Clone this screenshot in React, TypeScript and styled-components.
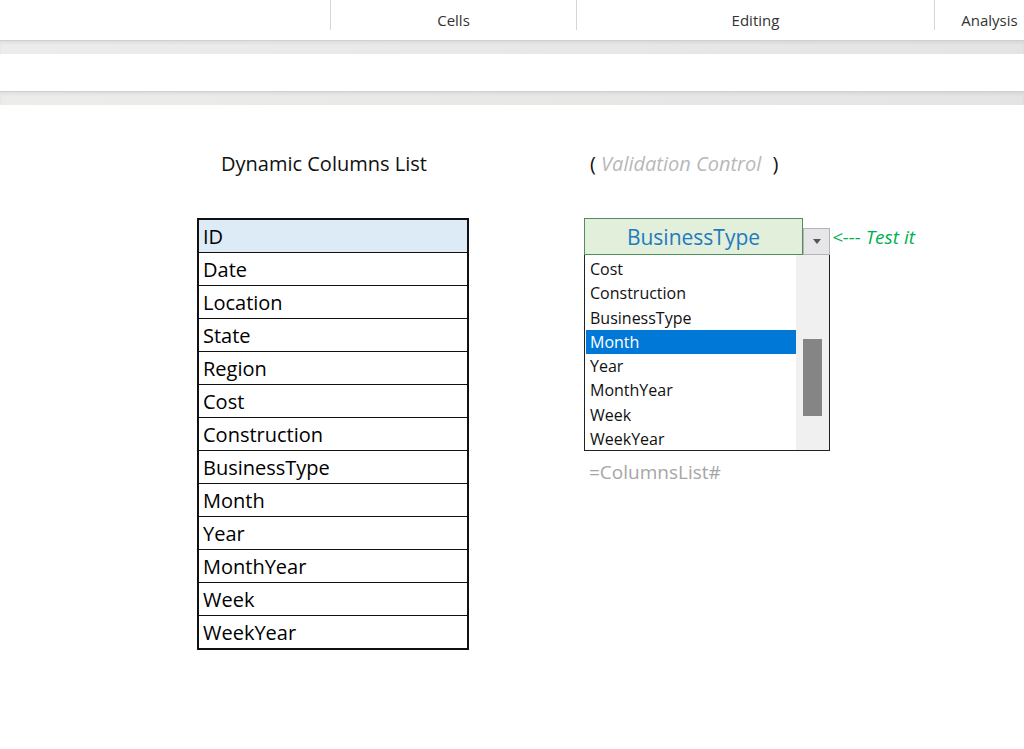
import styled, { createGlobalStyle } from "styled-components";

const Global = createGlobalStyle`
  body { margin: 0; background: #fff; font-family: "Open Sans", "Noto Sans", sans-serif; }
`;

const columns = ["ID", "Date", "Location", "State", "Region", "Cost", "Construction", "BusinessType", "Month", "Year", "MonthYear", "Week", "WeekYear"];
const listItems = ["Cost", "Construction", "BusinessType", "Month", "Year", "MonthYear", "Week", "WeekYear"];

export default function App() {
  return (
    <Page>
      <Global />
      <Ribbon>
        <Group $width={330} />
        <Group $width={246} $divider>Cells</Group>
        <Group $width={358} $divider>Editing</Group>
        <Group $width={110} $divider>Analysis</Group>
      </Ribbon>
      <Band />
      <FormulaBar />
      <Band />
      <Sheet>
        <LeftCol>
          <Title>Dynamic Columns List</Title>
          <Table>
            {columns.map((c, i) => (
              <Row key={c} $header={i === 0}>{c}</Row>
            ))}
          </Table>
        </LeftCol>
        <RightCol>
          <Caption>
            ( <Muted>Validation Control</Muted> )
          </Caption>
          <CellLine>
            <ValueCell>BusinessType</ValueCell>
            <DropButton>
              <svg width="8" height="5" viewBox="0 0 8 5"><path d="M0 0h8L4 5z" fill="#555" /></svg>
            </DropButton>
            <Hint>&lt;--- Test it</Hint>
          </CellLine>
          <ListBox>
            <Items>
              {listItems.map((t) => (
                <Item key={t} $selected={t === "Month"}>{t}</Item>
              ))}
            </Items>
            <Scroll>
              <Thumb />
            </Scroll>
          </ListBox>
          <Formula>=ColumnsList#</Formula>
        </RightCol>
      </Sheet>
    </Page>
  );
}

const Page = styled.div`
  width: 1024px;
  height: 749px;
  overflow: hidden;
`;

const Ribbon = styled.div`
  display: flex;
  height: 40px;
`;

const Group = styled.div<{ $width: number; $divider?: boolean }>`
  width: ${(p) => p.$width}px;
  flex-shrink: 0;
  height: 30px;
  border-left: ${(p) => (p.$divider ? "1px solid #d6d6d6" : "none")};
  display: flex;
  align-items: flex-end;
  justify-content: center;
  font-size: 15px;
  color: #333;
  white-space: nowrap;
  line-height: 18px;
  padding-bottom: 1px;
  box-sizing: border-box;
`;

const Band = styled.div`
  height: 13px;
  background: linear-gradient(90deg, #ececea, #e4e4e4);
  border-top: 1px solid #d0d0d0;
  box-shadow: inset 0 2px 3px rgba(0, 0, 0, 0.06);
`;

const FormulaBar = styled.div`
  height: 37px;
  background: #fff;
`;

const Sheet = styled.div`
  display: flex;
`;

const LeftCol = styled.div`
  margin-left: 197px;
  width: 272px;
`;

const Title = styled.div`
  margin-top: 44px;
  padding-left: 24px;
  font-size: 20px;
  height: 30px;
  line-height: 30px;
  color: #111;
`;

const Table = styled.div`
  margin-top: 39px;
  border: 2px solid #111;
  border-bottom-width: 1px;
`;

const Row = styled.div<{ $header?: boolean }>`
  height: 32px;
  border-bottom: 1px solid #111;
  background: ${(p) => (p.$header ? "#DDEBF7" : "#fff")};
  font-size: 20px;
  line-height: 33px;
  padding-left: 4px;
  color: #000;
`;

const RightCol = styled.div`
  margin-left: 115px;
  width: 360px;
`;

const Caption = styled.div`
  margin-top: 44px;
  padding-left: 6px;
  font-size: 20px;
  height: 30px;
  line-height: 30px;
  color: #111;
`;

const Muted = styled.span`
  color: #b8b8b8;
  font-style: italic;
  margin-right: 6px;
`;

const CellLine = styled.div`
  margin-top: 39px;
  display: flex;
  align-items: flex-end;
`;

const ValueCell = styled.div`
  width: 219px;
  height: 37px;
  box-sizing: border-box;
  border: 1.5px solid #4f8f5e;
  background: #e2efda;
  color: #1f7ac0;
  font-size: 21px;
  text-align: center;
  line-height: 36px;
`;

const DropButton = styled.div`
  width: 27px;
  height: 27px;
  box-sizing: border-box;
  border: 1px solid #b4b4b4;
  background: #e6e6e8;
  display: flex;
  align-items: center;
  justify-content: center;
`;

const Hint = styled.div`
  color: #00b050;
  font-style: italic;
  font-size: 19px;
  line-height: 28px;
  margin-left: 2px;
  align-self: center;
`;

const ListBox = styled.div`
  width: 246px;
  height: 196px;
  box-sizing: border-box;
  border: 1px solid #222;
  border-top: none;
  display: flex;
`;

const Items = styled.div`
  flex: 1;
  padding: 2px 0 0 1px;
`;

const Item = styled.div<{ $selected?: boolean }>`
  height: 24.3px;
  line-height: 24px;
  font-size: 16px;
  padding-left: 4px;
  background: ${(p) => (p.$selected ? "#0078d7" : "transparent")};
  color: ${(p) => (p.$selected ? "#fff" : "#111")};
`;

const Scroll = styled.div`
  width: 33px;
  background: #f0f0f0;
  display: flex;
  justify-content: center;
  padding-top: 84px;
  box-sizing: border-box;
`;

const Thumb = styled.div`
  width: 19px;
  height: 77px;
  background: #858585;
`;

const Formula = styled.div`
  padding-left: 5px;
  margin-top: 8px;
  font-size: 19px;
  color: #a6a6a6;
`;
